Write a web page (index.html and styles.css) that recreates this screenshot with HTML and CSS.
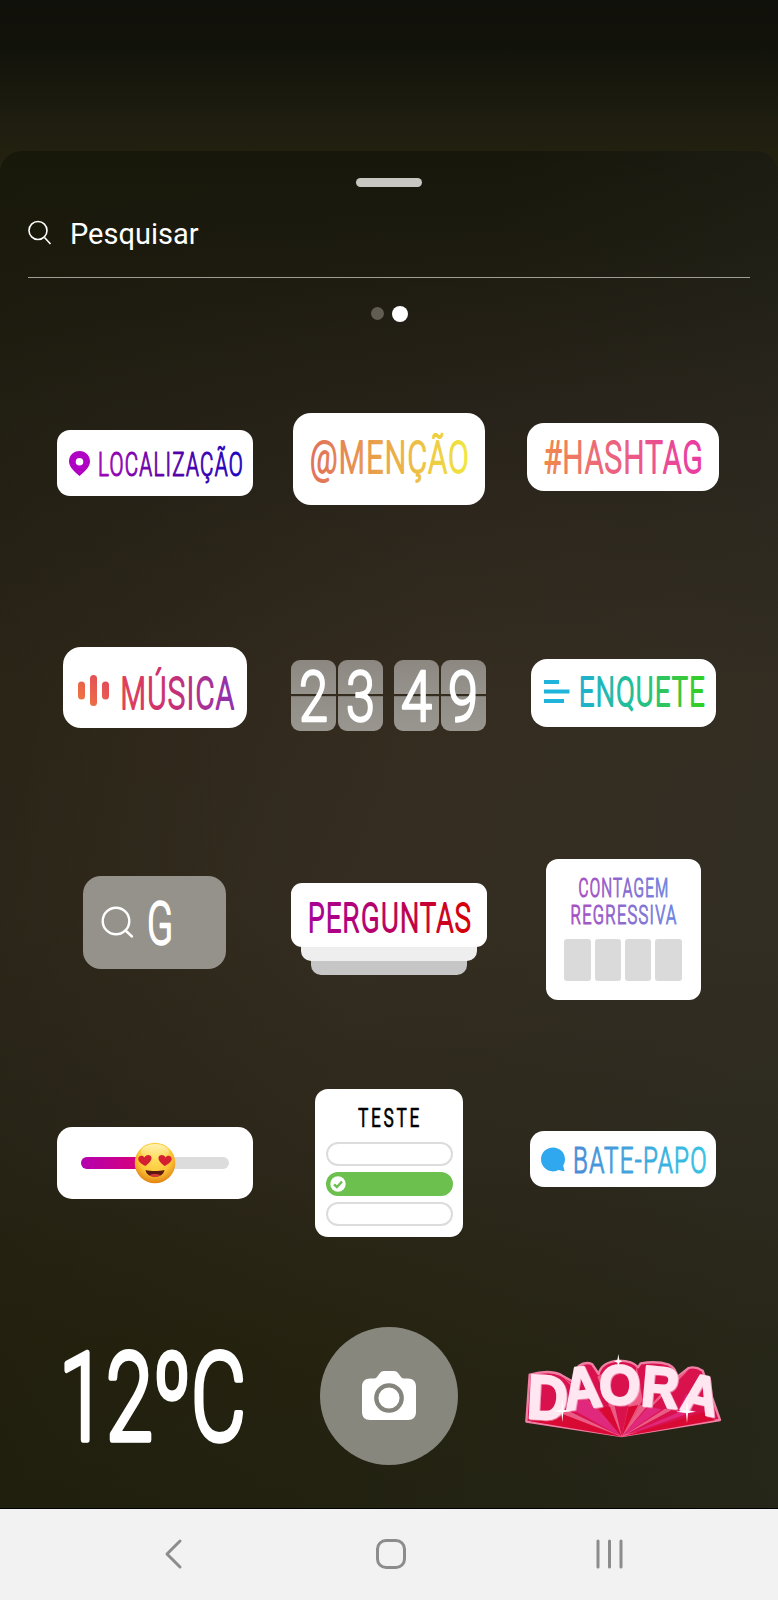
FILE: index.html
```html
<!DOCTYPE html>
<html lang="pt-BR">
<head>
    <meta charset="UTF-8">
    <meta name="viewport" content="width=device-width, initial-scale=1.0">
    <title>Stickers</title>
    <link rel="stylesheet" href="styles.css">
</head>
<body>
    <main class="sheet">
        <div class="handle"></div>
        <div class="search">
            <svg width="24" height="25" viewBox="0 0 24 25"><circle cx="10" cy="10.5" r="9"/><path d="M16.5 17.5l6 6.5"/></svg>
            <span>Pesquisar</span>
        </div>
        <div class="dots"><i></i><i class="active"></i></div>

        <div class="stickers">
            <div class="cell">
                <svg class="card location" width="196" height="66" viewBox="0 0 196 66">
                    <defs><linearGradient id="gLocation"><stop offset="0" stop-color="#a000b4"/><stop offset=".5" stop-color="#5800a8"/><stop offset="1" stop-color="#1800c0"/></linearGradient></defs>
                    <path fill="#b000c4" fill-rule="evenodd" d="M22.500 21c6 0 10.500 4.300 10.500 10.300 0 5.700-5 10-10.500 14.700C17 41.300 12 37 12 31.300 12 25.300 16.500 21 22.500 21zm0 7a3.800 3.800 0 1 0 0 7.600 3.800 3.800 0 0 0 0-7.600z"/>
                    <text class="thin" x="41" y="45.500" font-size="33" textLength="146" lengthAdjust="spacingAndGlyphs" fill="url(#gLocation)" stroke="url(#gLocation)">LOCALIZAÇÃO</text>
                </svg>
            </div>
            <div class="cell">
                <svg class="card mention" width="192" height="92" viewBox="0 0 192 92">
                    <defs><linearGradient id="gMention"><stop offset="0" stop-color="#e0705a"/><stop offset=".5" stop-color="#ebaa48"/><stop offset="1" stop-color="#f0e840"/></linearGradient></defs>
                    <text class="medium" x="17" y="60" font-size="45" textLength="160" lengthAdjust="spacingAndGlyphs" fill="url(#gMention)" stroke="url(#gMention)">@MENÇÃO</text>
                </svg>
            </div>
            <div class="cell">
                <svg class="card hashtag" width="192" height="68" viewBox="0 0 192 68">
                    <defs><linearGradient id="gHash"><stop offset="0" stop-color="#f08a4c"/><stop offset=".35" stop-color="#ec6878"/><stop offset="1" stop-color="#e83aa4"/></linearGradient></defs>
                    <text class="medium" x="17" y="49.500" font-size="44" textLength="160" lengthAdjust="spacingAndGlyphs" fill="url(#gHash)" stroke="url(#gHash)">#HASHTAG</text>
                </svg>
            </div>

            <div class="cell">
                <svg class="card music" width="184" height="81" viewBox="0 0 184 81">
                    <defs>
                        <linearGradient id="gMusic"><stop offset="0" stop-color="#e04058"/><stop offset=".4" stop-color="#cc3070"/><stop offset="1" stop-color="#8c30b0"/></linearGradient>
                        <linearGradient id="gBars" x1="0" y1="1" x2="1" y2="0"><stop offset="0" stop-color="#f07a3c"/><stop offset="1" stop-color="#e04460"/></linearGradient>
                    </defs>
                    <path fill="url(#gBars)" d="M15 38a3.500 3.500 0 0 1 7 0v11a3.500 3.500 0 0 1-7 0zM27 31.500a3.500 3.500 0 0 1 7 0v24a3.500 3.500 0 0 1-7 0zM39 38a3.500 3.500 0 0 1 7 0v11a3.500 3.500 0 0 1-7 0z"/>
                    <text class="medium" x="57.500" y="61.500" font-size="44.500" textLength="115" lengthAdjust="spacingAndGlyphs" fill="url(#gMusic)" stroke="url(#gMusic)">MÚSICA</text>
                </svg>
            </div>
            <div class="cell">
                <div class="clock">
                    <svg class="digit" width="45" height="71"><text x="8" y="60.500" font-size="70" textLength="29" lengthAdjust="spacingAndGlyphs">2</text></svg>
                    <svg class="digit" width="45" height="71"><text x="8" y="60.500" font-size="70" textLength="29" lengthAdjust="spacingAndGlyphs">3</text></svg>
                    <svg class="digit hour-end" width="45" height="71"><text x="7" y="60.500" font-size="70" textLength="31" lengthAdjust="spacingAndGlyphs">4</text></svg>
                    <svg class="digit" width="45" height="71"><text x="7" y="60.500" font-size="70" textLength="30" lengthAdjust="spacingAndGlyphs">9</text></svg>
                </div>
            </div>
            <div class="cell">
                <svg class="card poll" width="185" height="68" viewBox="0 0 185 68">
                    <defs><linearGradient id="gPoll"><stop offset="0" stop-color="#20b0d0"/><stop offset=".45" stop-color="#20c090"/><stop offset=".8" stop-color="#38c840"/><stop offset="1" stop-color="#30d020"/></linearGradient></defs>
                    <path fill="#20b4dc" d="M13 21h15v4H13zM13 30.500h25.500v4H13zM13 40h20v4H13z"/>
                    <text class="medium" x="48" y="46.500" font-size="41" textLength="127" lengthAdjust="spacingAndGlyphs" fill="url(#gPoll)" stroke="url(#gPoll)">ENQUETE</text>
                </svg>
            </div>

            <div class="cell">
                <svg class="card gif" width="143" height="93" viewBox="0 0 143 93">
                    <g fill="none" stroke="#fff" stroke-width="2.400" stroke-linecap="round"><circle cx="33" cy="45" r="13.300"/><path d="M42.500 54.500l6.500 6"/></g>
                    <text class="heavy" x="64" y="68" font-size="60" textLength="26" lengthAdjust="spacingAndGlyphs">G</text>
                </svg>
            </div>
            <div class="cell">
                <div class="questions">
                    <svg class="card" width="196" height="64" viewBox="0 0 196 64">
                        <defs><linearGradient id="gAsk"><stop offset="0" stop-color="#a80098"/><stop offset=".5" stop-color="#b80060"/><stop offset="1" stop-color="#d80000"/></linearGradient></defs>
                        <text class="medium" x="17" y="49" font-size="41" textLength="164" lengthAdjust="spacingAndGlyphs" fill="url(#gAsk)" stroke="url(#gAsk)">PERGUNTAS</text>
                    </svg>
                    <div class="under first"></div>
                    <div class="under second"></div>
                </div>
            </div>
            <div class="cell">
                <div class="card countdown">
                    <svg width="155" height="68" viewBox="0 0 155 68">
                        <defs><linearGradient id="gCount"><stop offset="0" stop-color="#a850c0"/><stop offset="1" stop-color="#7088e0"/></linearGradient></defs>
                        <text class="thin" x="32.500" y="37.500" font-size="25.500" textLength="91" lengthAdjust="spacingAndGlyphs" fill="url(#gCount)" stroke="url(#gCount)">CONTAGEM</text>
                        <text class="thin" x="24.500" y="64.500" font-size="25.500" textLength="107" lengthAdjust="spacingAndGlyphs" fill="url(#gCount)" stroke="url(#gCount)">REGRESSIVA</text>
                    </svg>
                    <div class="boxes"><i></i><i></i><i></i><i></i></div>
                </div>
            </div>

            <div class="cell">
                <div class="card slider">
                    <div class="track"><div class="fill"></div></div>
                    <svg class="emoji" width="42" height="42" viewBox="0 0 42 42">
                        <defs>
                            <radialGradient id="gFace" cx=".5" cy=".36" r=".66"><stop offset="0" stop-color="#ffe060"/><stop offset=".6" stop-color="#fcc838"/><stop offset="1" stop-color="#e07c10"/></radialGradient>
                            <linearGradient id="gShine" x1="0" y1="0" x2="0" y2="1"><stop offset="0" stop-color="#fff8c0" stop-opacity=".9"/><stop offset="1" stop-color="#fff8c0" stop-opacity="0"/></linearGradient>
                        </defs>
                        <circle cx="21" cy="21" r="20.300" fill="url(#gFace)"/>
                        <ellipse cx="21" cy="10" rx="14" ry="8" fill="url(#gShine)"/>
                        <path fill="#d42030" d="M11.500 24C7 22 4 19 4.300 16.500c.4-3.300 4.700-3.800 6.200-.9 1-3.200 5.800-3.600 6.900-.5.8 3-1.900 6-5.900 8.900z"/>
                        <path fill="#d42030" d="M30.500 24c4.500-2 7.500-5 7.200-7.500-.4-3.300-4.700-3.800-6.200-.9-1-3.200-5.800-3.600-6.900-.5-.8 3 1.900 6 5.900 8.900z"/>
                        <path fill="#5c1a10" d="M11.500 28c5.500 1.300 13.500 1.300 19 0-.8 4.500-4.500 6.700-9.500 6.700s-8.700-2.200-9.500-6.700z"/>
                        <path fill="#d83838" d="M15.500 33.200c2.500-1.700 8.500-1.700 11 0-3.200 2-7.800 2-11 0z"/>
                    </svg>
                </div>
            </div>
            <div class="cell">
                <div class="card quiz">
                    <svg width="62" height="24" viewBox="0 0 62 24"><text class="thin spaced" x="0" y="20.500" font-size="26" textLength="64" lengthAdjust="spacingAndGlyphs">TESTE</text></svg>
                    <div class="option"></div>
                    <div class="option right"><svg width="16" height="16" viewBox="0 0 16 16"><circle cx="8" cy="8" r="7.700" fill="#fff"/><path d="M4 8.300l2.900 2.700L12 5.500" fill="none" stroke="#6cc04e" stroke-width="2.400"/></svg></div>
                    <div class="option"></div>
                </div>
            </div>
            <div class="cell">
                <svg class="card chat" width="186" height="56" viewBox="0 0 186 56">
                    <defs><linearGradient id="gChat"><stop offset="0" stop-color="#4a8cd8"/><stop offset="1" stop-color="#34c4e4"/></linearGradient></defs>
                    <path fill="#30a8f0" d="M23 16.500c6.600 0 12 5 12 11.800 0 2.800-1 4.700-1.700 6 .1 2 .8 4 1.400 5.900-2-.2-4.200-.8-6-1.200-1.800.9-3.700 1.400-5.700 1.400-6.600 0-12-5.300-12-12.100s5.400-11.800 12-11.800z"/>
                    <text class="thin" x="43" y="41.500" font-size="36.500" textLength="135" lengthAdjust="spacingAndGlyphs" fill="url(#gChat)" stroke="url(#gChat)">BATE-PAPO</text>
                </svg>
            </div>

            <div class="cell">
                <svg class="temperature" width="186" height="100" viewBox="0 0 186 100">
                    <text x="-3" y="94" font-size="122" textLength="187" lengthAdjust="spacingAndGlyphs">12ºC</text>
                </svg>
            </div>
            <div class="cell">
                <div class="camera">
                    <svg width="54" height="50" viewBox="0 0 54 50">
                        <path fill="#fff" d="M15 6l3-4c1-1.300 2-2 4-2h10c2 0 3 .7 4 2l3 4c1 1.200 2 1.500 4 1.500h3c5 0 8 3 8 8V41c0 5-3 8-8 8H8c-5 0-8-3-8-8V15.500c0-5 3-8 8-8h3c2 0 3-.3 4-1.500z"/>
                        <circle cx="27" cy="27" r="12.700" fill="#fff" stroke="#85857d" stroke-width="4.300"/>
                    </svg>
                </div>
            </div>
            <div class="cell">
                <svg class="daora" width="230" height="120" viewBox="0 0 690 360">
                    <path fill="#d9124e" stroke="#ef7fa4" stroke-width="7" stroke-linejoin="round" d="M49 245L59 104q58-16 93 0l38 22 16-48q20-14 40-6l20 30q8-36 60-40 42 0 58 20l8-12q50-8 84 4 24 12 24 38l36-28q20-6 42 8l52 148-295 48z"/>
                    <path fill="#ee5d85" d="M335 290L155 108l42 34zM335 290L262 110l28-18zM335 290l45-210 18 100zM335 290l165-180 34-18z"/>
                    <path fill="#e0287c" d="M335 290L180 205l42-35zM335 290L240 185l42 12zM335 290l80-90 40 8zM335 290l165-70 30-60 20 55z"/>
                    <path fill="#ea5c86" d="M335 290L100 240l70-30zM335 290l-40-95 16 4zM335 290l55-95 20 5zM335 290l130-84 20 4z"/>
                    <path fill="#d80a34" d="M335 290L60 244l90-25zM335 290l-75-90h40zM335 290l20-90 30-5zM335 290l250-75 30 26z"/>
                    <g class="pink-letters">
                        <text transform="translate(48 234) rotate(3)" font-size="188" textLength="122" lengthAdjust="spacingAndGlyphs">D</text>
                        <text transform="translate(167 211) rotate(-7)" font-size="178" textLength="112" lengthAdjust="spacingAndGlyphs">A</text>
                        <text transform="translate(267 192)" font-size="168" textLength="124" lengthAdjust="spacingAndGlyphs">O</text>
                        <text transform="translate(390 196) rotate(5)" font-size="172" textLength="112" lengthAdjust="spacingAndGlyphs">R</text>
                        <text transform="translate(508 208) rotate(12)" font-size="164" textLength="108" lengthAdjust="spacingAndGlyphs">A</text>
                    </g>
                    <path fill="#fff" d="M325 42l3 18 9 4-9 4-3 14-3-14-9-4 9-4zM157 178l3 31 25 4-25 4-3 30-3-30-25-4 25-4zM531 178l3 33 24 4-24 4-3 30-3-30-30-4 30-4z"/>
                </svg>
            </div>
        </div>
    </main>

    <nav class="navbar">
        <svg width="18" height="30" viewBox="0 0 18 30"><path d="M16 2L3 15l13 13"/></svg>
        <svg class="home" width="32" height="32" viewBox="0 0 32 32"><rect x="2.500" y="2.500" width="27" height="27" rx="8.500"/></svg>
        <svg width="28" height="30" viewBox="0 0 28 30"><path d="M2 2v26M13.500 2v26M25 2v26"/></svg>
    </nav>
</body>
</html>
```
FILE: styles.css
```css
* {
    box-sizing: border-box;
}
body {
    margin: 0;
    width: 778px;
    height: 1600px;
    padding-top: 151px;
    overflow: hidden;
    background: linear-gradient(#10100a, #12130b 50px, #1e1d10 120px, #22200f 151px, #22200f 200px);
    font-family: Roboto, "Liberation Sans", sans-serif;
    color: #fff;
}
svg {
    display: block;
    flex-shrink: 0;
    overflow: visible;
}
.sheet {
    height: 1358px;
    border-radius: 22px 22px 0 0;
    background:
        linear-gradient(100deg, rgba(24, 24, 8, 0.45), rgba(30, 26, 12, 0) 50%, rgba(44, 48, 42, 0.35)),
        linear-gradient(#17170c, #1d1b10 100px, #28231a 260px, #352c20 540px, #352d21 760px, #2d281b 1000px, #25220f 1200px, #222110);
    border-bottom: 1px solid #000;
    overflow: hidden;
}
.handle {
    width: 66px;
    height: 9px;
    margin: 27px auto 0;
    border-radius: 5px;
    background: #c9c7c1;
}
.search {
    display: flex;
    align-items: center;
    gap: 18px;
    height: 91px;
    margin: 0 28px;
    padding-top: 3px;
    border-bottom: 1px solid #a09d96;
    font-size: 29px;
}
.search svg {
    margin-bottom: 3px;
    fill: none;
    stroke: #fff;
    stroke-width: 1.6;
}
.dots {
    display: flex;
    align-items: center;
    justify-content: center;
    gap: 8px;
    height: 17px;
    margin: 27px 0 0;
}
.dots i {
    width: 13px;
    height: 13px;
    border-radius: 50%;
    background: #615d52;
}
.dots .active {
    width: 16px;
    height: 16px;
    background: #fff;
}

/* sticker grid */
.stickers {
    display: grid;
    grid-template-columns: repeat(3, 234px);
    grid-auto-rows: 234px;
    margin: 21px 38px 0;
}
.cell {
    display: flex;
    align-items: center;
    justify-content: center;
}
.card {
    background: #fff;
    border-radius: 13px;
}
.thin, .medium, .heavy {
    font-weight: 300;
    letter-spacing: 2px;
    stroke-linejoin: round;
    stroke-width: 1.2px;
}
.medium {
    stroke-width: 1.8px;
}
.heavy {
    letter-spacing: 0;
    fill: #fff;
    stroke: #fff;
    stroke-width: 2.4px;
}
.spaced {
    font-weight: 400;
    letter-spacing: 4px;
    stroke-width: 0.6px;
}
.location {
    margin-top: 5px;
}
.mention {
    margin-bottom: 2px;
    border-radius: 18px;
}
.hashtag {
    margin-bottom: 6px;
    border-radius: 17px;
}
.music {
    margin: 0 0 13px;
    border-radius: 18px;
}
.clock {
    display: flex;
    gap: 2px;
    margin: 3px 2px 0 0;
}
.digit {
    border-radius: 9px;
    background: linear-gradient(#8c8881, #96928c 48%, #352c20 48.5%, #352c20 51%, #918d87 51.5%, #99958f);
    fill: #fff;
    stroke: #fff;
    stroke-width: 2.5px;
    stroke-linejoin: round;
    font-weight: 300;
}
.hour-end {
    margin-left: 9px;
}
.poll {
    margin-bottom: 2px;
    border-radius: 16px;
}
.gif {
    margin: 0 1px 11px 0;
    border-radius: 18px;
    background: #95928b;
}
.questions {
    margin-top: 2px;
}
.questions .card {
    position: relative;
    z-index: 2;
    border-radius: 11px;
}
.under {
    height: 24px;
    margin: -10px 10px 0;
    border-radius: 0 0 10px 10px;
    position: relative;
}
.first {
    z-index: 1;
    background: #eee;
}
.second {
    margin: -10px 20px 0;
    background: #c6c6c6;
}
.countdown {
    width: 155px;
    height: 141px;
    margin-top: 3px;
    border-radius: 12px;
}
.boxes {
    display: flex;
    justify-content: center;
    gap: 4px;
    margin-top: 12px;
}
.boxes i {
    width: 26.4px;
    height: 42px;
    border-radius: 3px;
    background: #dadada;
}
.slider {
    position: relative;
    width: 196px;
    height: 72px;
    margin-top: 2px;
    padding: 30px 24px;
    border-radius: 15px;
}
.track {
    height: 12px;
    border-radius: 6px;
    background: #dcdcdc;
}
.fill {
    width: 74px;
    height: 12px;
    border-radius: 6px 0 0 6px;
    background: linear-gradient(90deg, #b400b0, #e0006c);
}
.emoji {
    position: absolute;
    left: 77px;
    top: 15px;
}
.quiz {
    display: flex;
    flex-direction: column;
    align-items: center;
    gap: 6px;
    width: 148px;
    height: 148px;
    margin-top: 2px;
    padding-top: 17px;
}
.quiz > svg {
    margin-bottom: 6px;
    fill: #000;
    stroke: #000;
}
.option {
    width: 127px;
    height: 24px;
    border: 2px solid #dcdcdc;
    border-radius: 12px;
}
.right {
    padding: 2px;
    border-color: #6cc04e;
    background: #6cc04e;
}
.chat {
    margin-bottom: 6px;
    border-radius: 14px;
}
.temperature {
    fill: #fff;
    stroke: #fff;
    stroke-width: 5.5px;
    stroke-linejoin: round;
    font-weight: 300;
}
.camera {
    display: flex;
    align-items: center;
    justify-content: center;
    width: 138px;
    height: 138px;
    border-radius: 50%;
    background: #88877e;
}
.daora {
    margin: 8px 0 0 4px;
}
.pink-letters {
    fill: #ffe6f1;
    stroke: #ffe6f1;
    stroke-width: 7px;
    stroke-linejoin: round;
    font-family: "Liberation Sans", sans-serif;
    font-weight: 700;
    filter: drop-shadow(3px 2px 0 #f29abb);
}

/* system navigation */
.navbar {
    display: flex;
    align-items: center;
    justify-content: space-between;
    height: 91px;
    padding: 0 154px 2px 164px;
    background: #f2f2f2;
}
.navbar svg {
    fill: none;
    stroke: #8c8c8c;
    stroke-width: 3px;
    stroke-linecap: round;
    stroke-linejoin: round;
}
.navbar .home {
    margin-left: 4px;
}
```
